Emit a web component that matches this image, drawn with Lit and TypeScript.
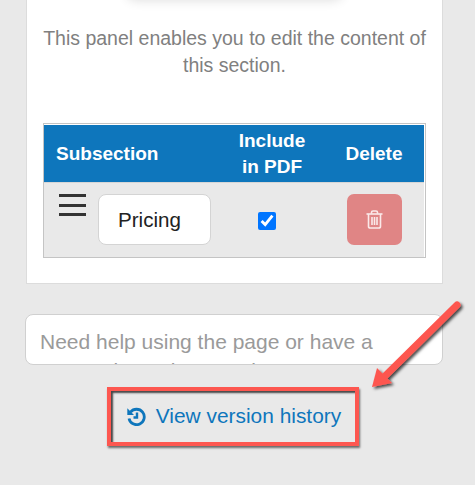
import { LitElement, html, css } from "lit";
import { customElement } from "lit/decorators.js";

@customElement("app-root")
export class AppRoot extends LitElement {
  static styles = css`
    :host {
      display: block;
      position: relative;
      width: 475px;
      height: 485px;
      overflow: hidden;
      background: #e9e9e9;
      font-family: "Liberation Sans", Arial, sans-serif;
    }
    .panel {
      box-sizing: border-box;
      width: 417px;
      height: 284px;
      margin-left: 26px;
      background: #fff;
      border: 1px solid #dcdcdc;
      border-top: 0;
      padding: 25px 16px 0;
      position: relative;
    }
    .top-shadow {
      position: absolute;
      left: 100px;
      right: 100px;
      top: -20px;
      height: 20px;
      box-shadow: 0 0 12px rgba(0, 0, 0, 0.14);
      border-radius: 8px;
    }
    .intro {
      margin: 0 -4px;
      text-align: center;
      color: #808080;
      font-size: 19.500px;
      line-height: 27px;
      white-space: nowrap;
    }
    .table {
      margin-top: 44px;
      border: 1px solid #c4c4c4;
      padding: 1px 1px 0 0;
    }
    .head {
      display: grid;
      grid-template-columns: 172px 112px 1fr;
      height: 57px;
      align-items: center;
      background: #0e76bc;
      color: #fff;
      font-weight: 700;
      font-size: 19px;
      line-height: 26px;
      border-bottom: 1px solid #d6d6d6;
    }
    .head .sub {
      padding-left: 12px;
    }
    .head .c {
      text-align: center;
    }
    .head .d {
      text-align: center;
      padding-right: 4px;
    }
    .row {
      display: grid;
      grid-template-columns: 172px 102px 1fr;
      height: 74px;
      background: #e9e9e9;
    }
    .first {
      display: flex;
      gap: 12px;
      padding-left: 15px;
      align-items: flex-start;
    }
    .burger {
      display: flex;
      flex-direction: column;
      gap: 6.500px;
      margin-top: 11px;
      width: 27px;
    }
    .burger i {
      display: block;
      height: 3px;
      background: #333;
    }
    .name {
      box-sizing: border-box;
      width: 113px;
      height: 51px;
      margin-top: 11px;
      background: #fff;
      border: 1px solid #d4d4d4;
      border-radius: 8px;
      padding-left: 19px;
      font-size: 20.600px;
      line-height: 49px;
      color: #222;
    }
    .check {
      display: flex;
      align-items: center;
      justify-content: center;
      padding-top: 1px;
    }
    .check input {
      width: 18px;
      height: 18px;
      margin: 0;
      accent-color: #0075ff;
    }
    .del {
      padding-left: 29px;
    }
    .del button {
      box-sizing: border-box;
      width: 55px;
      height: 51px;
      margin-top: 11px;
      border: 0;
      border-radius: 7px;
      background: #e08585;
      display: flex;
      align-items: center;
      justify-content: center;
      padding: 0;
    }
    .help {
      box-sizing: border-box;
      width: 418px;
      height: 51px;
      margin: 30px 0 0 25px;
      background: #fff;
      border: 1px solid #d0d0d0;
      border-radius: 8px;
      overflow: hidden;
      padding: 12px 14px 0;
      color: #9a9a9a;
      font-size: 21px;
      line-height: 29px;
      text-align: left;
    }
    .link-row {
      display: flex;
      justify-content: center;
      margin-top: 39px;
      margin-left: -7px;
    }
    .link {
      display: flex;
      align-items: center;
      gap: 10px;
      color: #0e76bc;
      font-size: 20.900px;
      line-height: 24px;
      text-decoration: none;
    }
    .callout {
      position: absolute;
      left: 107px;
      top: 387px;
      width: 252px;
      height: 59px;
      box-sizing: border-box;
      border: 4px solid #fd5750;
      box-shadow: 1px 2px 2px rgba(0, 0, 0, 0.55), inset 2px 2px 2px rgba(0, 0, 0, 0.7);
      pointer-events: none;
    }
    .arrow {
      position: absolute;
      left: 360px;
      top: 290px;
      overflow: visible;
    }
  `;

  render() {
    return html`
      <div class="panel">
        <div class="top-shadow"></div>
        <p class="intro">This panel enables you to edit the content of<br />this section.</p>
        <div class="table">
          <div class="head">
            <div class="sub">Subsection</div>
            <div class="c">Include<br />in PDF</div>
            <div class="d">Delete</div>
          </div>
          <div class="row">
            <div class="first">
              <div class="burger"><i></i><i></i><i></i></div>
              <div class="name">Pricing</div>
            </div>
            <div class="check"><input type="checkbox" checked /></div>
            <div class="del">
              <button aria-label="Delete">
                <svg width="17" height="19" viewBox="0 0 17 19" fill="none" stroke="#fbe9e9" stroke-width="1.600">
                  <path d="M0.500 4H16.500" />
                  <path d="M5.500 3.800V2.400Q5.500 1 7 1H10Q11.500 1 11.500 2.400V3.800" />
                  <path d="M2.500 4V16.200Q2.500 18 4.300 18H12.700Q14.500 18 14.500 16.200V4" />
                  <path d="M6 7V15M8.500 7V15M11 7V15" />
                </svg>
              </button>
            </div>
          </div>
        </div>
      </div>
      <div class="help">Need help using the page or have a suggestion to improve it?</div>
      <div class="link-row">
        <a class="link" href="#">
          <svg width="19" height="19" viewBox="0 0 19 19" fill="none" stroke="#0e76bc" stroke-width="2.800">
            <path d="M3.500 5.200A7.700 7.700 0 1 1 2 11.500" />
            <path d="M0.300 1.300V8H7Z" fill="#0e76bc" stroke="none" />
            <path d="M10 5.500V10.500H6.500" stroke-width="2.400" />
          </svg>
          View version history
        </a>
      </div>
      <div class="callout"></div>
      <svg class="arrow" width="110" height="110" viewBox="0 0 110 110">
        <defs>
          <filter id="s" x="-20%" y="-20%" width="150%" height="150%">
            <feDropShadow dx="2" dy="2" stdDeviation="1.500" flood-color="#000" flood-opacity="0.7" />
          </filter>
        </defs>
        <g filter="url(#s)">
          <path d="M97 15L24 87" stroke="#fd5750" stroke-width="7" stroke-linecap="round" fill="none" />
          <path d="M12 97L17 78L32 93Z" fill="#fd5750" />
        </g>
      </svg>
    `;
  }
}
